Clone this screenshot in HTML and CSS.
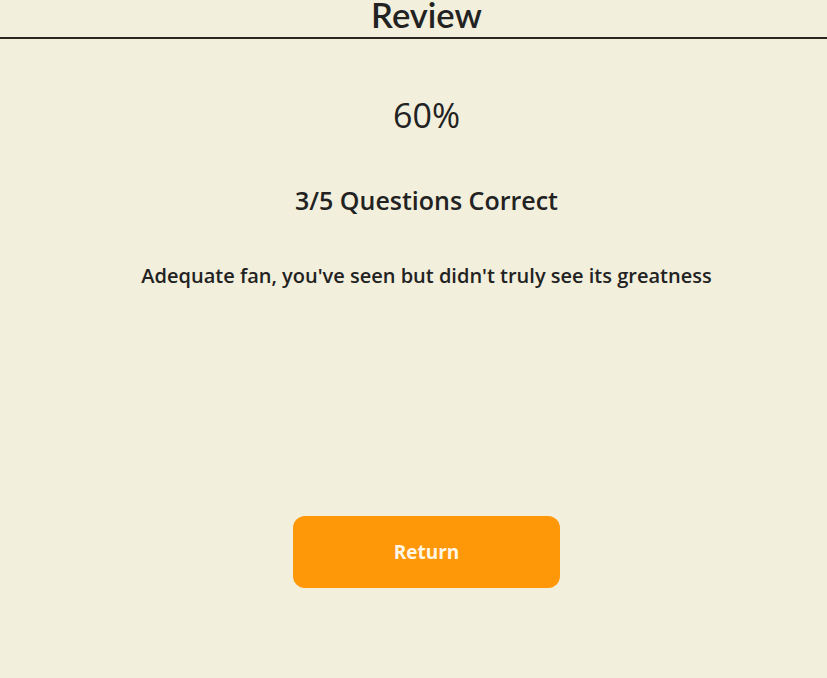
FILE: index.html
```html
<!DOCTYPE html>
<html>
<head>
<meta charset="utf-8">
<link rel="stylesheet" href="styles.css">
</head>
<body>
<header class="top">
  <h1 class="title">Review</h1>
</header>
<main class="review">
  <div class="score">60%</div>
  <div class="count">3/5 Questions Correct</div>
  <p class="verdict">Adequate fan, you've seen but didn't truly see its greatness</p>
  <button class="return">Return</button>
</main>
</body>
</html>
```
FILE: styles.css
```css
html, body {
  margin: 0;
  padding: 0;
  background: #f2efdc;
  color: #222222;
  font-family: "Open Sans", "Noto Sans", sans-serif;
}
.top {
  border-bottom: 2px solid #2b2620;
  text-align: center;
  padding: 0 0 7px 26px;
}
.title {
  margin: 0;
  font-family: Lato, sans-serif;
  font-weight: 600;
  font-size: 34.5px;
  line-height: 30px;
}
.review {
  display: flex;
  flex-direction: column;
  align-items: center;
  padding-left: 26px;
}
.score {
  margin-top: 54px;
  font-size: 34px;
  line-height: 44px;
}
.count {
  margin-top: 46px;
  font-size: 25px;
  font-weight: 600;
  line-height: 34px;
}
.verdict {
  margin: 45px 0 0;
  font-size: 20px;
  font-weight: 600;
  line-height: 28px;
}
.return {
  margin-top: 226px;
  width: 267px;
  height: 72px;
  border: none;
  border-radius: 12px;
  background: #ff9808;
  color: #fff6e6;
  font-family: "Open Sans", "Noto Sans", sans-serif;
  font-weight: 700;
  font-size: 19px;
}
```
